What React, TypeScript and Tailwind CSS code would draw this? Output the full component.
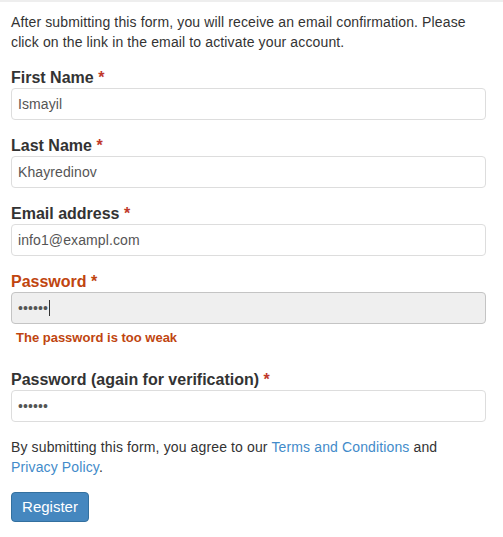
import React from "react";

const font = { fontFamily: '"Liberation Sans", Arial, sans-serif' };

function Field({
  label,
  value,
  type = "text",
  error,
}: {
  label: string;
  value: string;
  type?: string;
  error?: string;
}) {
  return (
    <div className={error ? "mb-[22px]" : "mb-4"}>
      <label
        className={
          "block h-5 text-[16px] leading-5 font-bold " +
          (error ? "text-[#c0450f]" : "text-[#333333]")
        }
      >
        {label} <span className={error ? "text-[#c0450f]" : "text-[#c0392b]"}>*</span>
      </label>
      <div className="relative">
        <input
          type={type}
          defaultValue={value}
          readOnly
          className={
            "block h-8 w-full rounded border px-[6px] text-[14px] tracking-[0.1px] text-[#555555] outline-none " +
            (error ? "border-[#c4c4c4] bg-[#efefef]" : "border-[#dddddd] bg-white")
          }
        />
        {error && (
          <span className="absolute left-[38px] top-[8px] h-4 w-px bg-[#333333]" />
        )}
      </div>
      {error && (
        <div className="mt-1 h-5 pl-[5px] text-[13px] leading-5 font-bold text-[#c0450f]">
          {error}
        </div>
      )}
    </div>
  );
}

export default function App() {
  return (
    <div className="min-h-[537px] w-[503px] border-t-2 border-[#eeeeee] bg-white" style={font}>
      <div className="pl-[11px] pr-[17px] pt-[10px]">
        <p className="mb-4 text-[14px] leading-5 tracking-[0.13px] text-[#333333]">
          After submitting this form, you will receive an email confirmation. Please
          click on the link in the email to activate your account.
        </p>

        <Field label="First Name" value="Ismayil" />
        <Field label="Last Name" value="Khayredinov" />
        <Field label="Email address" value="info1@exampl.com" />
        <Field
          label="Password"
          value="123456"
          type="password"
          error="The password is too weak"
        />
        <Field
          label="Password (again for verification)"
          value="123456"
          type="password"
        />

        <p className="-mt-px mb-[15px] text-[14px] leading-5 tracking-[0.13px] text-[#333333]">
          By submitting this form, you agree to our{" "}
          <a className="text-[#428bca]">Terms and Conditions</a> and
          <br />
          <a className="text-[#428bca]">Privacy Policy</a>.
        </p>

        <button className="h-[30px] w-[78px] rounded border border-[#33709f] bg-[#4587bf] text-[15px] text-white">
          Register
        </button>
      </div>
    </div>
  );
}
